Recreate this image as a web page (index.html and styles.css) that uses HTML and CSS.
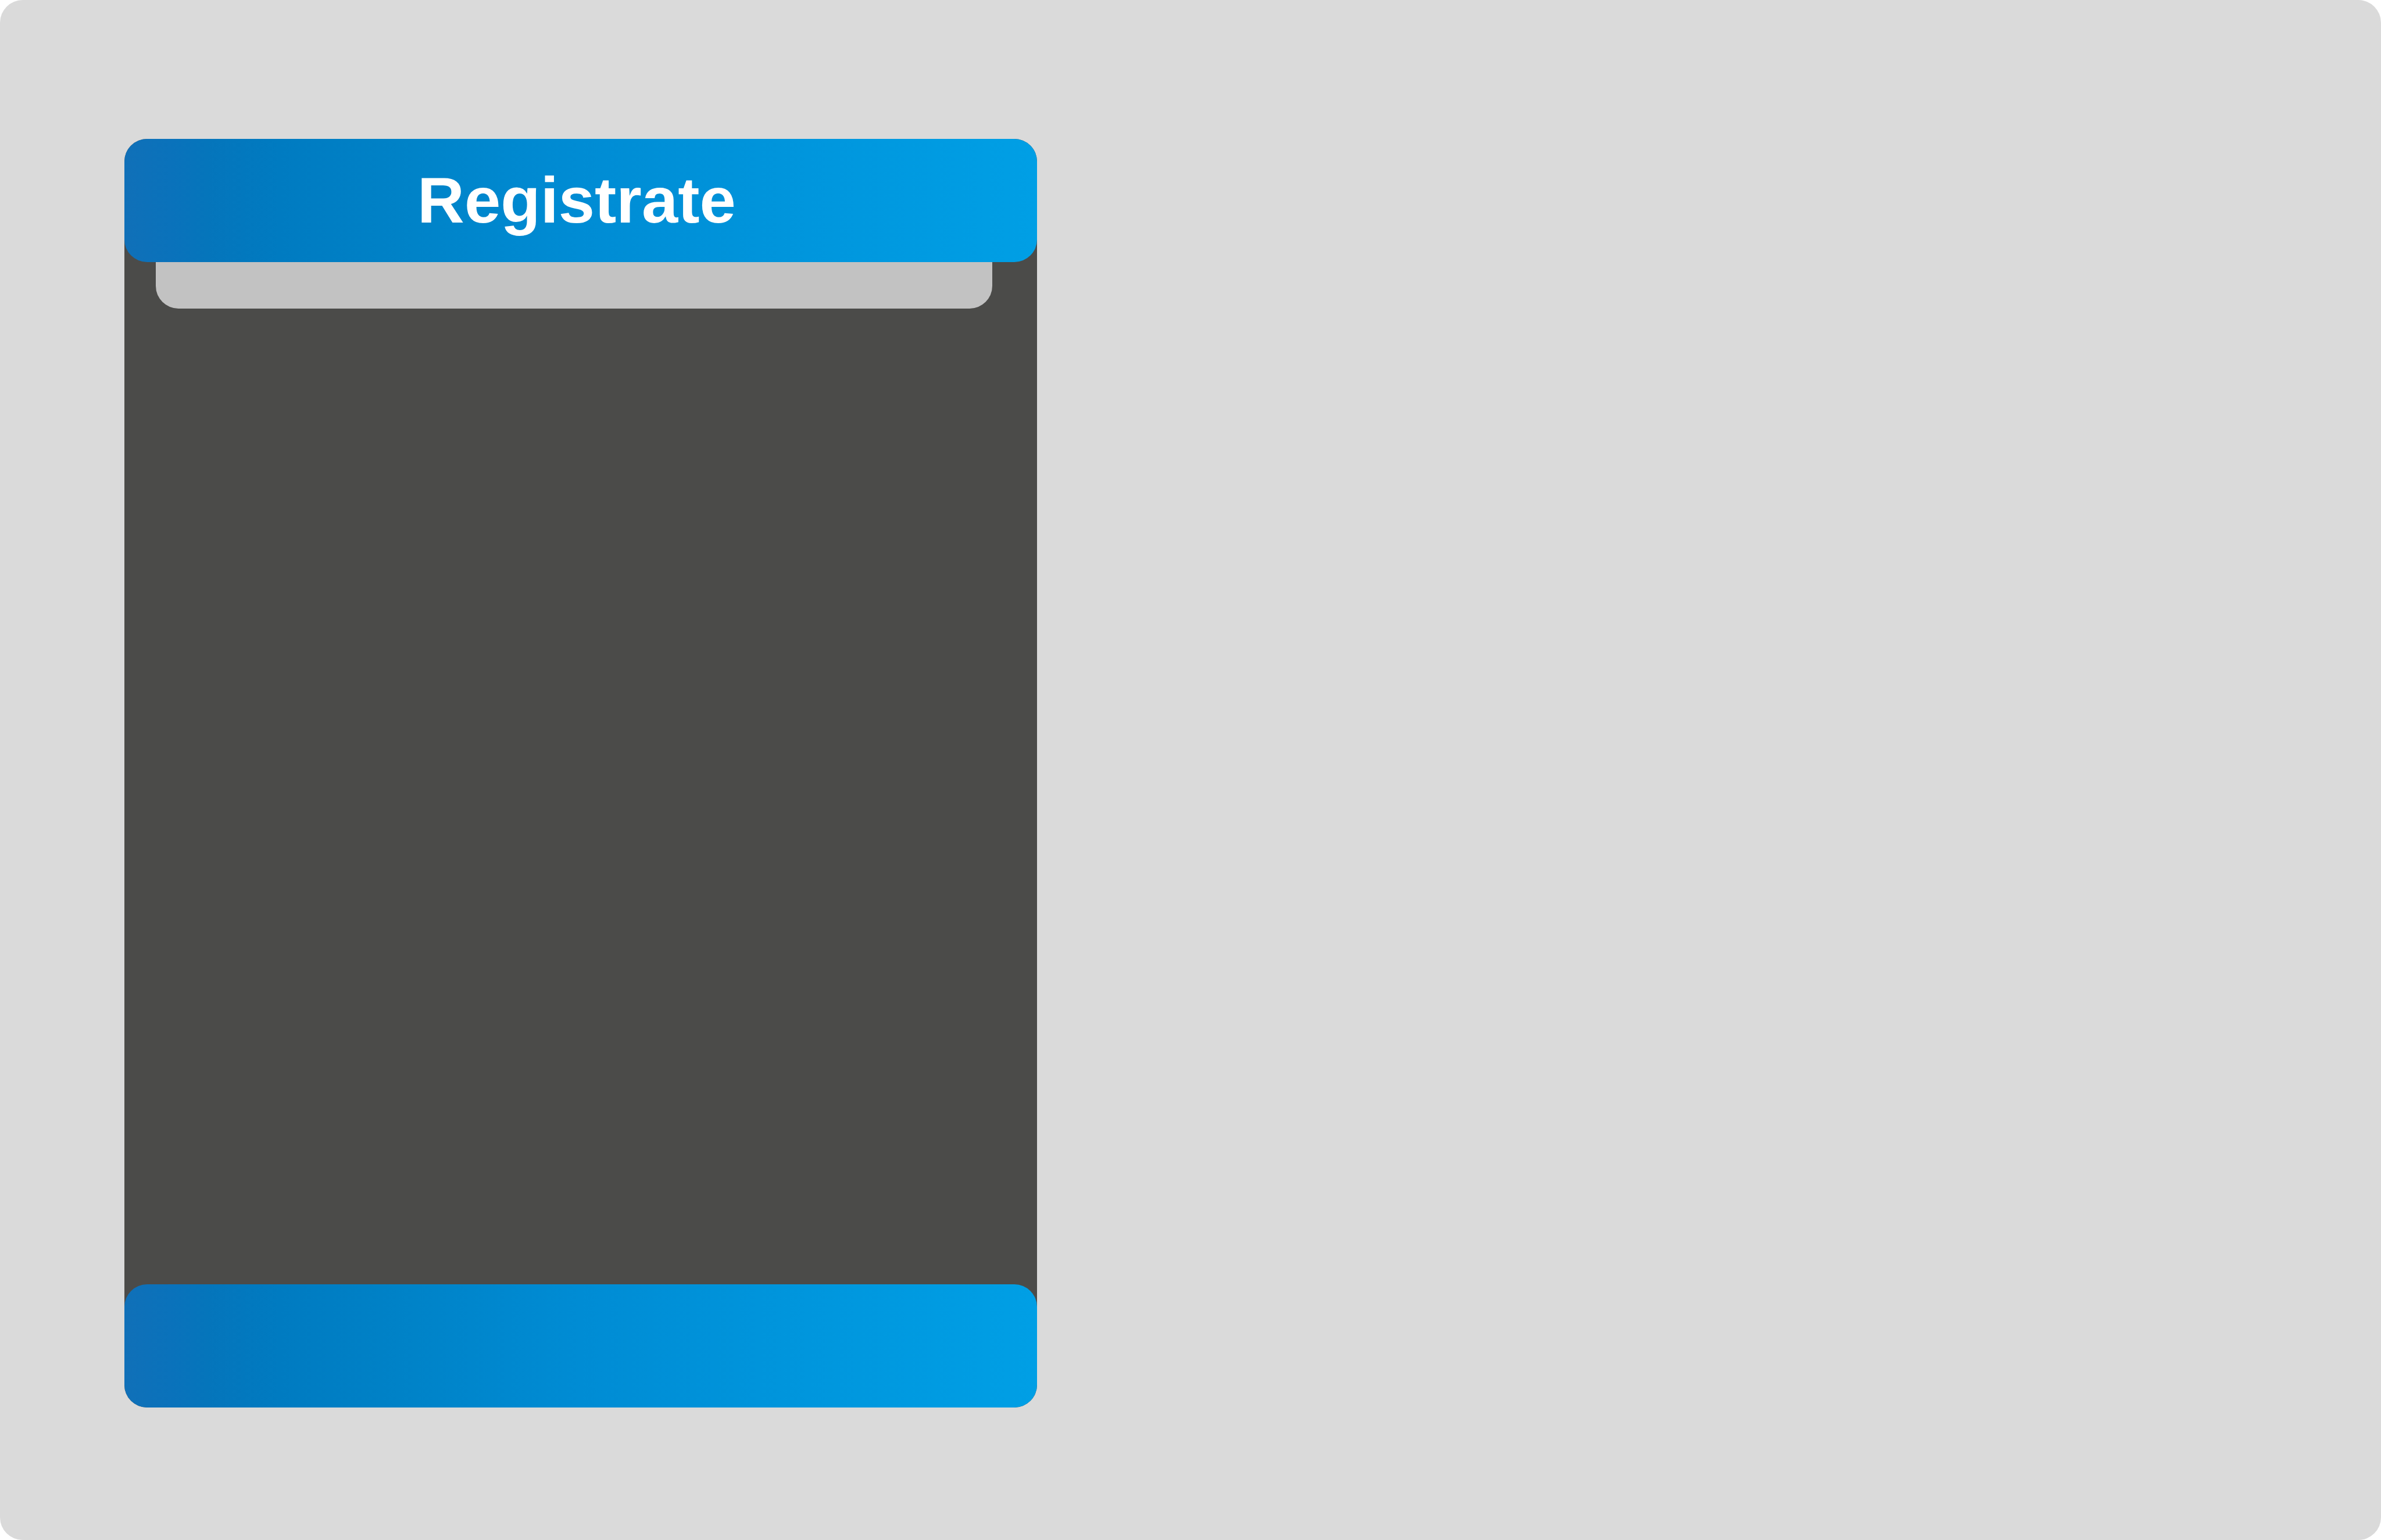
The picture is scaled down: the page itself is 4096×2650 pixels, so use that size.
FILE: index.html
```html
<!DOCTYPE html>
<html lang="es">
<head>
  <meta charset="utf-8">
  <meta name="viewport" content="width=device-width, initial-scale=1">
  <title>Registrate</title>
  <link rel="stylesheet" href="styles.css">
</head>
<body>
  <main class="page">
    <section class="card">
      <header class="card-bar card-header">
        <h1 class="card-title">Registrate</h1>
      </header>
      <div class="card-body">
        <div class="card-tab"></div>
      </div>
      <footer class="card-bar"></footer>
    </section>
  </main>
</body>
</html>
```

FILE: styles.css
```css
* {
  box-sizing: border-box;
}

body {
  margin: 0;
  background: #ffffff;
  font-family: "Liberation Sans", Arial, sans-serif;
}

.page {
  display: flex;
  min-height: 100vh;
  padding: 239px 214px 228px;
  border-radius: 39px;
  background: #dadada;
}

.card {
  display: flex;
  flex-direction: column;
  width: 42.8%;
  border-radius: 39px;
  background: #4b4b49;
}

.card-bar {
  flex: none;
  min-height: 212px;
  border-radius: 39px;
  background: linear-gradient(to right, #1070b8 0%, #0a72bb 5%, #0575bb 9%, #007bc1 17%, #0082c7 30%, #008cd4 50%, #0095dc 72%, #009fe5 100%);
}

.card-header {
  display: flex;
  align-items: center;
  justify-content: center;
  padding-right: 14px;
}

.card-title {
  margin: 0;
  color: #ffffff;
  font-size: 112px;
  font-weight: 700;
  line-height: 128px;
}

.card-body {
  flex: 1;
  padding: 0 77px 0 54px;
}

.card-tab {
  height: 80px;
  border-radius: 0 0 39px 39px;
  background: #c2c2c2;
}
```
